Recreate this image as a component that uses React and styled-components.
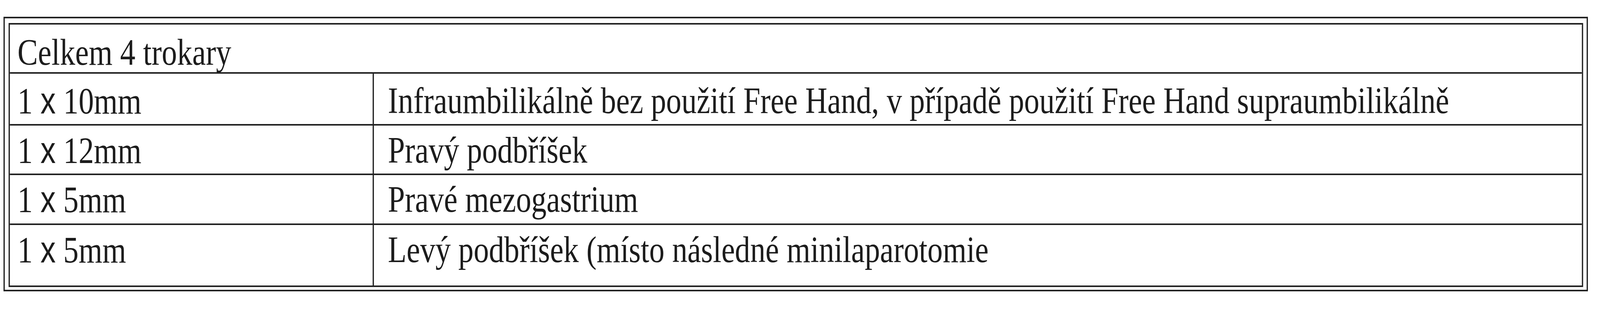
import React, { useEffect, useState } from "react";
import styled, { createGlobalStyle } from "styled-components";

const REF_WIDTH = 5028;

const Global = createGlobalStyle`
  html, body { margin: 0; padding: 0; background: #fff; overflow: hidden; }
  body { font-family: "Liberation Serif", "Times New Roman", serif; color: #1c1c1c; }
`;

/* The page is drawn at the reference width and fitted to the window width. */
const Stage = styled.div`
  width: ${REF_WIDTH}px;
  padding-top: 43px;
  transform-origin: 0 0;
`;

const Frame = styled.div`
  box-sizing: border-box;
  margin: 0 38px 0 11px;
  border: 4px solid #222;
  padding: 12px 11px 7px 12px;
`;

const Table = styled.div`
  border: 4px solid #222;
  font-size: 96px;
  line-height: 96px;
`;

const Header = styled.div`
  box-sizing: border-box;
  height: 122px;
  padding: 23px 0 0 24px;
  white-space: nowrap;
`;

const Row = styled.div`
  display: grid;
  grid-template-columns: 1140px minmax(0, 1fr);
  height: ${(p) => p.$h}px;
  border-top: 4px solid #222;
`;

const Cell = styled.div`
  box-sizing: border-box;
  padding: ${(p) => p.$top}px 0 0 ${(p) => (p.$second ? 44 : 24)}px;
  border-left: ${(p) => (p.$second ? "4px solid #222" : "none")};
  white-space: nowrap;
`;

const Times = styled.span`
  font-family: "Liberation Sans", Arial, sans-serif;
`;

const rows = [
  { n: "10mm", t: "Infraumbilikálně bez použití Free Hand, v případě použití Free Hand supraumbilikálně", h: 129, top: 21 },
  { n: "12mm", t: "Pravý podbříšek", h: 123, top: 15 },
  { n: "5mm", t: "Pravé mezogastrium", h: 124, top: 14 },
  { n: "5mm", t: "Levý podbříšek (místo následné minilaparotomie", h: 155, top: 15 },
];

function useFit() {
  const get = () =>
    typeof window === "undefined" ? 1 : Math.min(1, window.innerWidth / REF_WIDTH);
  const [sx, setSx] = useState(get);
  useEffect(() => {
    const on = () => setSx(get());
    window.addEventListener("resize", on);
    return () => window.removeEventListener("resize", on);
  }, []);
  return sx;
}

export default function App() {
  const sx = useFit();
  return (
    <>
      <Global />
      <Stage style={{ transform: `scaleX(${sx})` }}>
        <Frame>
          <Table>
            <Header>Celkem 4 trokary</Header>
            {rows.map((r, i) => (
              <Row key={i} $h={r.h}>
                <Cell $top={r.top}>
                  1 <Times>x</Times> {r.n}
                </Cell>
                <Cell $top={r.top} $second>
                  {r.t}
                </Cell>
              </Row>
            ))}
          </Table>
        </Frame>
      </Stage>
    </>
  );
}
